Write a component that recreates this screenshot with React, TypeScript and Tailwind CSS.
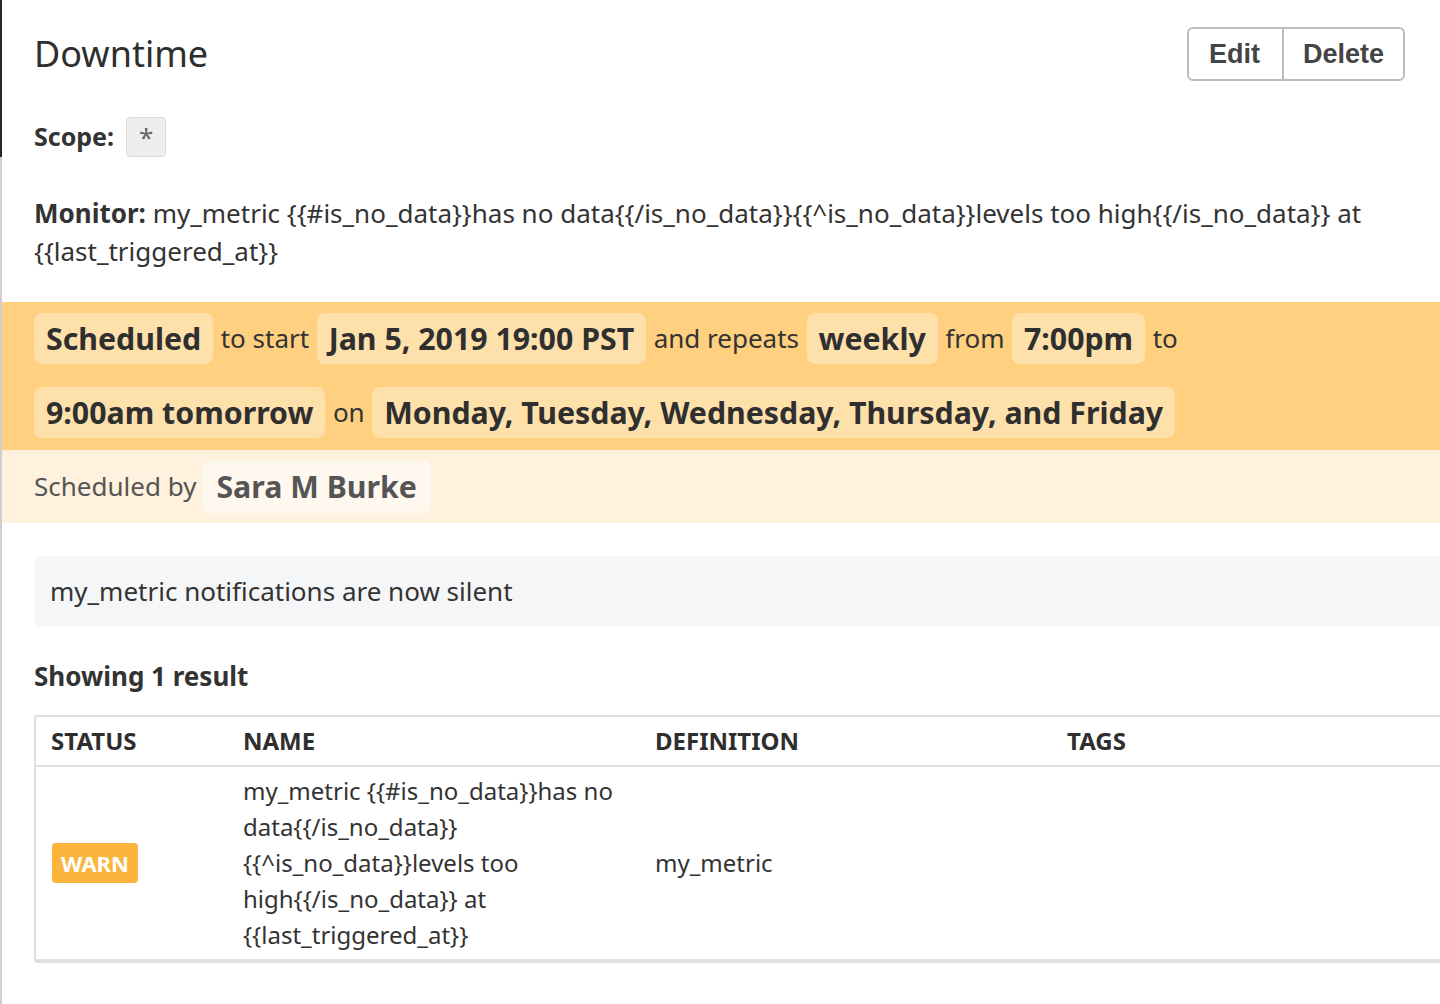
import React from 'react';

const font = { fontFamily: '"Noto Sans", "Open Sans", sans-serif' };

const Chip: React.FC<{ children: React.ReactNode }> = ({ children }) => (
  <span className="inline-flex h-[51px] items-center rounded-lg bg-[#fee0ab] px-3 text-[30.3px] font-bold text-[#2f2f2f]">
    {children}
  </span>
);

const Word: React.FC<{ children: React.ReactNode }> = ({ children }) => (
  <span className="text-[26px] text-[#333]">{children}</span>
);

const nameText =
  'my_metric {{#is_no_data}}has no data{{/is_no_data}}{{^is_no_data}}levels too high{{/is_no_data}} at {{last_triggered_at}}';

const App: React.FC = () => {
  return (
    <div className="flex min-h-[1004px] w-[1440px] overflow-hidden bg-white" style={font}>
      {/* window edge behind the panel */}
      <div className="flex w-[2px] shrink-0 flex-col">
        <div className="h-[157px] bg-[#26262b]" />
        <div className="flex-1 bg-[#cfcfd2]" />
      </div>

      <div className="min-w-0 flex-1 text-[#333]">
        {/* header */}
        <div className="flex items-start justify-between pl-[32px] pr-[35px] pt-[27px]">
          <h1 className="text-[36px] leading-[54px] text-[#2e2e2e]">Downtime</h1>
          <div
            className="flex h-[54px] overflow-hidden rounded-md border-2 border-[#bcbcbc] text-[27px] font-bold text-[#444]"
            style={{ fontFamily: '"Liberation Sans", Arial, sans-serif' }}
          >
            <button className="pl-[20px] pr-[22px]">Edit</button>
            <div className="w-[2px] bg-[#bcbcbc]" />
            <button className="px-[19px]">Delete</button>
          </div>
        </div>

        {/* scope */}
        <div className="mt-[36px] flex items-center gap-3 pl-[32px]">
          <span className="text-[25px] font-bold">Scope:</span>
          <span className="flex h-[40px] w-[40px] items-center justify-center rounded border border-[#dcdcdc] bg-[#eeeeee] text-[26px] text-[#666]">
            *
          </span>
        </div>

        {/* monitor */}
        <div className="mt-[37px] pl-[32px] pr-[60px] text-[26px] leading-[38px]">
          <b>Monitor:</b> {nameText}
        </div>

        {/* schedule */}
        <div className="mt-[32px] flex flex-wrap items-center gap-x-[7.5px] gap-y-[23px] bg-[#fed07f] pb-[12px] pl-[32px] pr-6 pt-[11px]">
          <Chip>Scheduled</Chip>
          <Word>to start</Word>
          <Chip>Jan 5, 2019 19:00 PST</Chip>
          <Word>and repeats</Word>
          <Chip>weekly</Chip>
          <Word>from</Word>
          <Chip>7:00pm</Chip>
          <Word>to</Word>
          <Chip>9:00am tomorrow</Chip>
          <Word>on</Word>
          <Chip>Monday, Tuesday, Wednesday, Thursday, and Friday</Chip>
        </div>
        <div className="flex h-[73px] items-center gap-[6px] bg-[#fef1de] pl-[32px]">
          <span className="text-[26px] text-[#555]">Scheduled by</span>
          <span className="inline-flex h-[52px] items-center rounded-lg bg-[#fff8ee] px-[14px] text-[30.3px] font-bold text-[#555]">
            Sara M Burke
          </span>
        </div>

        {/* message */}
        <div className="ml-[32px] mr-[-20px] mt-[33px] flex h-[70px] items-center rounded-md bg-[#f5f6f8] px-4 text-[26px] text-[#333]">
          my_metric notifications are now silent
        </div>

        <h2 className="mt-[32px] pl-[32px] text-[26px] font-bold leading-[36px]">Showing 1 result</h2>

        {/* results table */}
        <div className="ml-[32px] mr-[-40px] mt-[21px] rounded-[3px] border-2 border-b-4 border-[#dfdfe3]">
          <div className="flex h-[50px] items-center border-b-2 border-[#dfdfe3] text-[24px] font-bold uppercase text-[#2e2e2e]">
            <div className="w-[192px] shrink-0 pl-[15px]">Status</div>
            <div className="w-[412px] shrink-0 pl-[15px]">Name</div>
            <div className="w-[412px] shrink-0 pl-[15px]">Definition</div>
            <div className="w-[412px] shrink-0 pl-[15px]">Tags</div>
          </div>
          <div className="flex items-center py-[6px] text-[24px] leading-[36px]">
            <div className="w-[192px] shrink-0 pl-[16px]">
              <span className="inline-flex h-[40px] items-center rounded bg-[#fbb53c] px-[9px] text-[22px] font-bold text-white">
                WARN
              </span>
            </div>
            <div className="w-[412px] shrink-0 px-[15px]">{nameText}</div>
            <div className="w-[412px] shrink-0 px-[15px]">my_metric</div>
            <div className="w-[412px] shrink-0 px-[15px]" />
          </div>
        </div>
      </div>
    </div>
  );
};

export default App;
